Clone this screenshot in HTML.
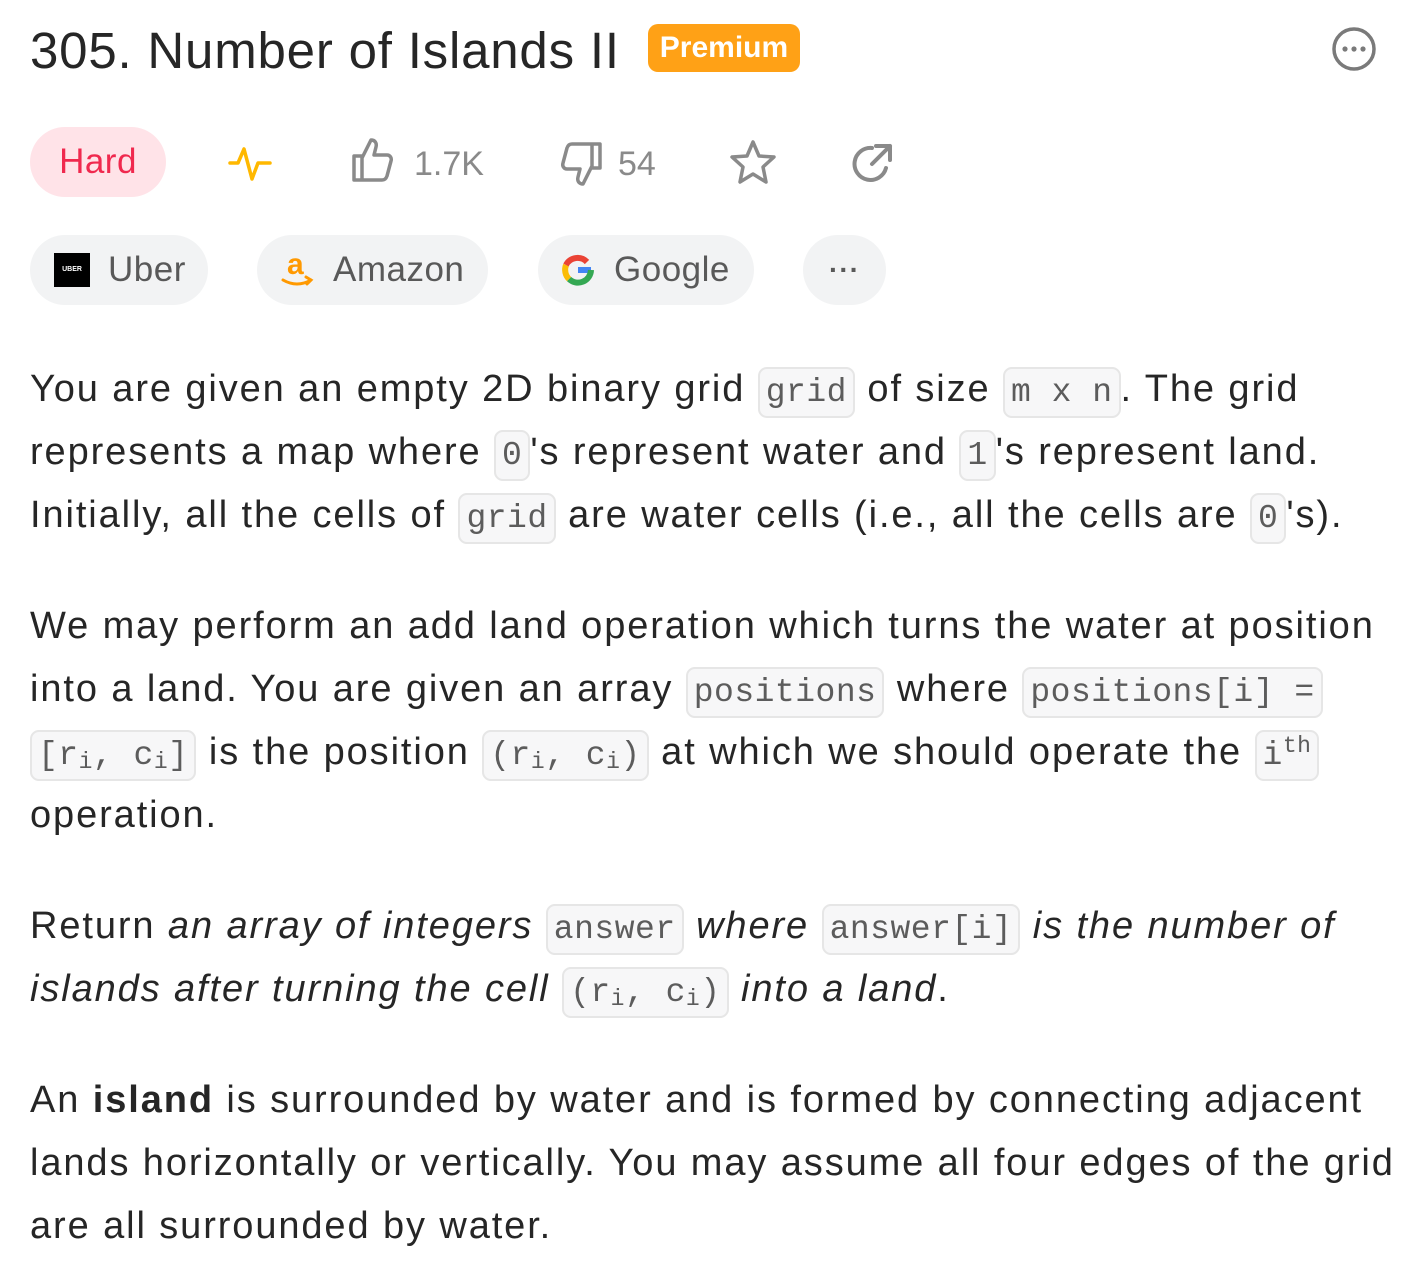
<!DOCTYPE html>
<html><head><meta charset="utf-8"><style>
body{margin:0;width:1402px;height:1288px;background:#fff;font-family:"Liberation Sans",sans-serif;color:#262626;position:relative;overflow:hidden}
.a{position:absolute;white-space:nowrap}
.t{font-size:38px;line-height:63px;left:30px;letter-spacing:1.9px}
code{font-family:"Liberation Mono",monospace;font-size:33px;letter-spacing:0.5px;color:#5c5c5c;background:#f7f7f8;border:2px solid #e6e6e6;border-radius:9px;padding:5px 6px}
sub{font-size:23px;vertical-align:-4px;line-height:0}
sup{font-size:23px;vertical-align:12px;line-height:0}
.pill{position:absolute;height:70px;border-radius:35px;background:#f2f3f4;display:flex;align-items:center;font-size:35px;color:#595959;letter-spacing:0.5px}
.ic{position:absolute}
</style></head><body>
<div class="a" style="left:30px;top:20px;font-size:51px;line-height:62px;color:#262626;letter-spacing:0.8px">305. Number of Islands II</div>
<div class="a" style="left:648px;top:24px;width:152px;height:48px;background:#ffa116;border-radius:10px;color:#fff;font-size:30px;font-weight:bold;line-height:48px;text-align:center">Premium</div>
<svg class="ic" style="left:1330px;top:25px" width="48" height="48" viewBox="0 0 48 48"><circle cx="24" cy="24" r="20" fill="none" stroke="#7a7a7a" stroke-width="3.5"/><circle cx="15" cy="24" r="2.6" fill="#7a7a7a"/><circle cx="24" cy="24" r="2.6" fill="#7a7a7a"/><circle cx="33" cy="24" r="2.6" fill="#7a7a7a"/></svg>

<div class="pill" style="left:30px;top:127px;width:136px;background:#ffe3e8;color:#f0294e;justify-content:center">Hard</div>
<svg class="ic" style="left:228px;top:142px" width="46" height="42" viewBox="0 0 46 42"><path d="M2 21h8l6-14 8 30 6-16h12" fill="none" stroke="#ffb800" stroke-width="3.5" stroke-linejoin="round" stroke-linecap="round"/></svg>
<svg class="ic" style="left:350px;top:136px" width="48" height="48" viewBox="0 0 48 48"><path d="M4 20h8v24H4zM12 22l9-18c4 0 6 3 5 7l-2 8h13c3 0 5 3 4 6l-4 15c-1 3-3 4-5 4H12" fill="none" stroke="#8a8a8a" stroke-width="3.5" stroke-linejoin="round"/></svg>
<div class="a" style="left:414px;top:142px;font-size:34px;line-height:44px;color:#8a8a8a">1.7K</div>
<svg class="ic" style="left:556px;top:140px" width="48" height="48" viewBox="0 0 48 48"><path d="M44 28h-8V4h8zM36 26l-9 18c-4 0-6-3-5-7l2-8H11c-3 0-5-3-4-6l4-15c1-3 3-4 5-4h20" fill="none" stroke="#8a8a8a" stroke-width="3.5" stroke-linejoin="round"/></svg>
<div class="a" style="left:618px;top:142px;font-size:34px;line-height:44px;color:#8a8a8a">54</div>
<svg class="ic" style="left:728px;top:138px" width="50" height="50" viewBox="0 0 50 50"><path d="M25 4l6 14 15 1-11 10 3 15-13-8-13 8 3-15L4 19l15-1z" fill="none" stroke="#8a8a8a" stroke-width="3.5" stroke-linejoin="round"/></svg>
<svg class="ic" style="left:848px;top:140px" width="48" height="48" viewBox="0 0 48 48"><path d="M38 28a16 16 0 1 1-14-20M28 6h14v14M42 6L24 24" fill="none" stroke="#8a8a8a" stroke-width="4" stroke-linecap="round" stroke-linejoin="round"/></svg>

<div class="pill" style="left:30px;top:235px;width:178px"><div style="margin-left:24px;width:36px;height:34px;background:#000;color:#fff;font-size:7px;font-weight:bold;text-align:center;line-height:34px;letter-spacing:0">UBER</div><span style="margin-left:18px">Uber</span></div>
<div class="pill" style="left:257px;top:235px;width:231px"><svg style="margin-left:22px" width="38" height="44" viewBox="0 0 38 44"><text x="8" y="26" font-family="Liberation Sans" font-weight="bold" font-size="30" fill="#ff9900">a</text><path d="M4 32q14 8 28 0M27 29l5 3-4 4" fill="none" stroke="#ff9900" stroke-width="3" stroke-linecap="round"/></svg><span style="margin-left:16px">Amazon</span></div>
<div class="pill" style="left:538px;top:235px;width:216px"><svg style="margin-left:22px" width="36" height="36" viewBox="0 0 36 36"><path d="M31 18h-13" stroke="#4285f4" stroke-width="6" fill="none"/><path d="M31 18a13 13 0 0 1-22 9" stroke="#34a853" stroke-width="6" fill="none"/><path d="M9 27a13 13 0 0 1-3-14" stroke="#fbbc05" stroke-width="6" fill="none"/><path d="M6 13a13 13 0 0 1 21-3" stroke="#ea4335" stroke-width="6" fill="none"/></svg><span style="margin-left:18px">Google</span></div>
<div class="pill" style="left:803px;top:235px;width:83px;justify-content:center;font-weight:bold;font-size:28px;letter-spacing:1px">···</div>

<div class="a t" style="top:358px">You are given an empty 2D binary grid <code>grid</code> of size <code>m x n</code>. The grid</div>
<div class="a t" style="top:421px">represents a map where <code>0</code>'s represent water and <code>1</code>'s represent land.</div>
<div class="a t" style="top:484px">Initially, all the cells of <code>grid</code> are water cells (i.e., all the cells are <code>0</code>'s).</div>

<div class="a t" style="top:595px">We may perform an add land operation which turns the water at position</div>
<div class="a t" style="top:658px">into a land. You are given an array <code>positions</code> where <code>positions[i] =</code></div>
<div class="a t" style="top:721px"><code>[r<sub>i</sub>, c<sub>i</sub>]</code> is the position <code>(r<sub>i</sub>, c<sub>i</sub>)</code> at which we should operate the <code>i<sup>th</sup></code></div>
<div class="a t" style="top:784px">operation.</div>

<div class="a t" style="top:895px">Return <i>an array of integers</i> <code>answer</code> <i>where</i> <code>answer[i]</code> <i>is the number of</i></div>
<div class="a t" style="top:958px"><i>islands after turning the cell</i> <code>(r<sub>i</sub>, c<sub>i</sub>)</code> <i>into a land</i>.</div>

<div class="a t" style="top:1069px">An <b>island</b> is surrounded by water and is formed by connecting adjacent</div>
<div class="a t" style="top:1132px">lands horizontally or vertically. You may assume all four edges of the grid</div>
<div class="a t" style="top:1195px">are all surrounded by water.</div>
</body></html>
